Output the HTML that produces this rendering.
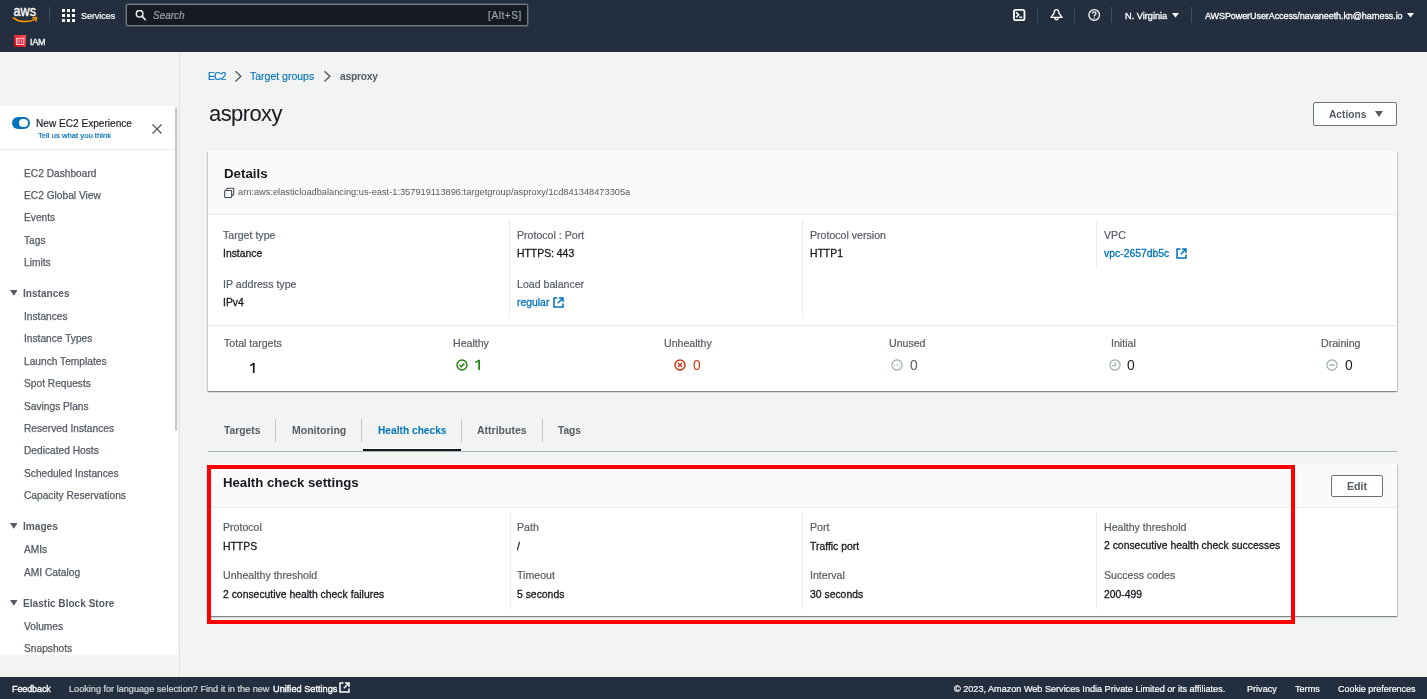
<!DOCTYPE html>
<html><head><meta charset="utf-8">
<style>
*{box-sizing:border-box;margin:0;padding:0}
html,body{width:1427px;height:699px;overflow:hidden;background:#f2f3f3;font-family:"Liberation Sans",sans-serif;color:#16191f;position:relative}
.abs{position:absolute}
.t{position:absolute;white-space:nowrap;line-height:1;will-change:transform}
.cont{position:absolute;background:#fff;box-shadow:0 1px 1px 0 rgba(0,28,36,.3),1px 1px 1px 0 rgba(0,28,36,.15),-1px 1px 1px 0 rgba(0,28,36,.15)}
</style></head><body>
<div class="abs" style="left:0px;top:0px;width:1427px;height:52px;background:#232f3e;"></div>
<svg class="abs" style="left:8px;top:4px" width="36" height="22" viewBox="0 0 36 22">
<text x="5.6" y="11.6" font-family="Liberation Sans" font-size="15" fill="#fff" textLength="22.4" lengthAdjust="spacingAndGlyphs" stroke="#fff" stroke-width="0.35">aws</text>
<path d="M5.3 13.9 C 11 18.3, 20 18.8, 26.6 15.3" stroke="#f90" stroke-width="1.5" fill="none" stroke-linecap="round"/>
<path d="M24.9 13.8 L28.6 13.6 L27.7 17.1" fill="none" stroke="#f90" stroke-width="1.5" stroke-linejoin="round" stroke-linecap="round"/>
</svg>
<div class="abs" style="left:49px;top:7px;width:1px;height:16px;background:#414d5c;"></div>
<svg class="abs" style="left:62px;top:9px" width="13" height="13" viewBox="0 0 13 13" fill="#fff">
<rect x="0" y="0" width="3" height="3"/><rect x="5" y="0" width="3" height="3"/><rect x="10" y="0" width="3" height="3"/>
<rect x="0" y="5" width="3" height="3"/><rect x="5" y="5" width="3" height="3"/><rect x="10" y="5" width="3" height="3"/>
<rect x="0" y="10" width="3" height="3"/><rect x="5" y="10" width="3" height="3"/><rect x="10" y="10" width="3" height="3"/>
</svg>
<div class="t" style="left:80.50px;top:12.00px;font-size:9px;color:#fff;font-weight:normal;-webkit-text-stroke:0.2px #fff;letter-spacing:-0.05px">Services</div>
<div class="abs" style="left:126px;top:4px;width:402px;height:23px;background:#161b22;border:1px solid #737e84;box-shadow:0 0 0 0.5px #5d676d;border-radius:2px;height:22.3px"></div>
<svg class="abs" style="left:135px;top:10px" width="12" height="12" viewBox="0 0 12 12">
<circle cx="4.6" cy="3.7" r="3.3" stroke="#e9ebed" stroke-width="1.5" fill="none"/>
<path d="M7 6.1 L10.2 9.6" stroke="#e9ebed" stroke-width="1.6" stroke-linecap="round"/>
</svg>
<div class="t" style="left:153.00px;top:11.00px;font-size:10px;color:#9aa4a8;font-weight:normal;font-style:italic;-webkit-text-stroke:0.2px #9aa4a8">Search</div>
<div class="t" style="left:487.50px;top:11.00px;font-size:10px;color:#9aa4a8;font-weight:normal;letter-spacing:0.6px;-webkit-text-stroke:0.2px #9aa4a8">[Alt+S]</div>
<svg class="abs" style="left:1013px;top:9px" width="13" height="12" viewBox="0 0 13 12">
<rect x="0.95" y="0.95" width="10.5" height="10.3" rx="1.8" stroke="#fff" stroke-width="1.8" fill="none"/>
<path d="M3.1 3.3 L5.6 5.8 L3.1 8.3" stroke="#fff" stroke-width="1.6" fill="none"/>
<path d="M6.2 8.3 H9.2" stroke="#fff" stroke-width="1.4" fill="none"/>
</svg>
<div class="abs" style="left:1037px;top:7px;width:1px;height:16px;background:#414d5c;"></div>
<svg class="abs" style="left:1050px;top:8px" width="13" height="14" viewBox="0 0 13 14">
<path d="M6.5 1.6 C 8.3 1.6, 8.9 3.4, 8.9 5.2 L 12 9.4 H 1 L 4.1 5.2 C 4.1 3.4, 4.7 1.6, 6.5 1.6 Z" stroke="#fff" stroke-width="1.4" fill="none" stroke-linejoin="round"/>
<path d="M4.8 10.1 A1.7 1.7 0 0 0 8.2 10.1" stroke="#fff" stroke-width="1.4" fill="none"/>
</svg>
<div class="abs" style="left:1074px;top:7px;width:1px;height:16px;background:#414d5c;"></div>
<svg class="abs" style="left:1087.5px;top:9px" width="13" height="13" viewBox="0 0 13 13">
<circle cx="6.2" cy="6" r="5.3" stroke="#fff" stroke-width="1.3" fill="none"/>
<path d="M4.4 4.6 Q4.4 2.9 6.2 2.9 Q8 2.9 8 4.5 Q8 5.5 6.9 6 Q6.2 6.4 6.2 7.5" stroke="#fff" stroke-width="1.3" fill="none"/>
<rect x="5.55" y="8.5" width="1.3" height="1.3" fill="#fff"/>
</svg>
<div class="abs" style="left:1111px;top:7px;width:1px;height:16px;background:#414d5c;"></div>
<div class="t" style="left:1124.70px;top:12.00px;font-size:9.2px;color:#fff;font-weight:normal;-webkit-text-stroke:0.3px #fff">N. Virginia</div>
<svg class="abs" style="left:1171.5px;top:12.8px" width="7" height="5" viewBox="0 0 7 5"><path d="M0 0 H7 L3.5 4.6 Z" fill="#fff"/></svg>
<div class="abs" style="left:1191px;top:7px;width:1px;height:16px;background:#414d5c;"></div>
<div class="t" style="left:1204.60px;top:12.00px;font-size:9px;color:#fff;font-weight:normal;-webkit-text-stroke:0.3px #fff;letter-spacing:-0.08px">AWSPowerUserAccess/navaneeth.kn@harness.io</div>
<svg class="abs" style="left:1406.5px;top:12.8px" width="7" height="5" viewBox="0 0 7 5"><path d="M0 0 H7 L3.5 4.6 Z" fill="#fff"/></svg>
<svg class="abs" style="left:14px;top:35px" width="12" height="12" viewBox="0 0 12 12">
<defs><linearGradient id="ig" x1="0" y1="1" x2="1" y2="0"><stop offset="0" stop-color="#bd0816"/><stop offset="1" stop-color="#ff5252"/></linearGradient></defs>
<rect width="12" height="12" fill="url(#ig)"/>
<rect x="2.4" y="3.3" width="7.4" height="6.3" stroke="#fde" stroke-width="0.8" fill="none"/>
<circle cx="4.5" cy="5.7" r="1.1" stroke="#fde" stroke-width="0.7" fill="none"/>
<path d="M3.3 8.4 Q4.5 6.9 5.7 8.4 M7.4 4.6 V8.2" stroke="#fde" stroke-width="0.7" fill="none"/>
</svg>
<div class="t" style="left:29.90px;top:38.00px;font-size:9px;color:#eee;font-weight:normal;-webkit-text-stroke:0.3px #fff;letter-spacing:-0.25px">IAM</div>
<div class="abs" style="left:0px;top:52px;width:179px;height:625px;background:#f2f3f3;"></div>
<div class="abs" style="left:179px;top:52px;width:1px;height:625px;background:#dfe3e3;"></div>
<div class="abs" style="left:0px;top:105.7px;width:178px;height:549.8px;background:#fff;"></div>
<div class="abs" style="left:177px;top:107px;width:1px;height:324px;background:#eceef0;"></div>
<div class="abs" style="left:175px;top:107px;width:2.2px;height:324px;background:#c4c7cd;border-radius:1px"></div>
<div class="abs" style="left:12px;top:116.8px;width:18px;height:12px;border-radius:6px;background:#0073bb"></div>
<div class="abs" style="left:19.4px;top:118.6px;width:8.8px;height:8.8px;border-radius:50%;background:#fff"></div>
<div class="t" style="left:36.00px;top:119.00px;font-size:10.1px;color:#16191f;font-weight:normal;-webkit-text-stroke:0.15px #16191f">New EC2 Experience</div>
<div class="t" style="left:38.20px;top:132.00px;font-size:7.7px;color:#0073bb;font-weight:normal;-webkit-text-stroke:0.2px #0073bb">Tell us what you think</div>
<svg class="abs" style="left:151px;top:123px" width="12" height="12" viewBox="0 0 12 12">
<path d="M1.5 1.5 L10.5 10.5 M10.5 1.5 L1.5 10.5" stroke="#545b64" stroke-width="1.4"/>
</svg>
<div class="abs" style="left:0px;top:149px;width:175px;height:1px;background:#eaeded;"></div>
<div class="t" style="left:24.00px;top:169.00px;font-size:10.2px;color:#545b64;font-weight:normal;-webkit-text-stroke:0.25px #545b64">EC2 Dashboard</div>
<div class="t" style="left:24.00px;top:191.00px;font-size:10.2px;color:#545b64;font-weight:normal;-webkit-text-stroke:0.25px #545b64">EC2 Global View</div>
<div class="t" style="left:24.00px;top:213.00px;font-size:10.2px;color:#545b64;font-weight:normal;-webkit-text-stroke:0.25px #545b64">Events</div>
<div class="t" style="left:24.00px;top:236.00px;font-size:10.2px;color:#545b64;font-weight:normal;-webkit-text-stroke:0.25px #545b64">Tags</div>
<div class="t" style="left:24.00px;top:258.00px;font-size:10.2px;color:#545b64;font-weight:normal;-webkit-text-stroke:0.25px #545b64">Limits</div>
<div class="t" style="left:23.40px;top:289.00px;font-size:10.1px;color:#545b64;font-weight:bold;">Instances</div>
<svg class="abs" style="left:9.7px;top:290.1px" width="7.6" height="5.8" viewBox="0 0 7.6 5.8"><path d="M0 0 H7.6 L3.8 5.8 Z" fill="#545b64"/></svg>
<div class="t" style="left:24.00px;top:312.00px;font-size:10.2px;color:#545b64;font-weight:normal;-webkit-text-stroke:0.25px #545b64">Instances</div>
<div class="t" style="left:24.00px;top:334.00px;font-size:10.2px;color:#545b64;font-weight:normal;-webkit-text-stroke:0.25px #545b64">Instance Types</div>
<div class="t" style="left:24.00px;top:357.00px;font-size:10.2px;color:#545b64;font-weight:normal;-webkit-text-stroke:0.25px #545b64">Launch Templates</div>
<div class="t" style="left:24.00px;top:379.00px;font-size:10.2px;color:#545b64;font-weight:normal;-webkit-text-stroke:0.25px #545b64">Spot Requests</div>
<div class="t" style="left:24.00px;top:402.00px;font-size:10.2px;color:#545b64;font-weight:normal;-webkit-text-stroke:0.25px #545b64">Savings Plans</div>
<div class="t" style="left:24.00px;top:424.00px;font-size:10.2px;color:#545b64;font-weight:normal;-webkit-text-stroke:0.25px #545b64">Reserved Instances</div>
<div class="t" style="left:24.00px;top:446.00px;font-size:10.2px;color:#545b64;font-weight:normal;-webkit-text-stroke:0.25px #545b64">Dedicated Hosts</div>
<div class="t" style="left:24.00px;top:469.00px;font-size:10.2px;color:#545b64;font-weight:normal;-webkit-text-stroke:0.25px #545b64">Scheduled Instances</div>
<div class="t" style="left:24.00px;top:491.00px;font-size:10.2px;color:#545b64;font-weight:normal;-webkit-text-stroke:0.25px #545b64">Capacity Reservations</div>
<div class="t" style="left:23.40px;top:522.00px;font-size:10.1px;color:#545b64;font-weight:bold;">Images</div>
<svg class="abs" style="left:9.7px;top:523.1px" width="7.6" height="5.8" viewBox="0 0 7.6 5.8"><path d="M0 0 H7.6 L3.8 5.8 Z" fill="#545b64"/></svg>
<div class="t" style="left:24.00px;top:545.00px;font-size:10.2px;color:#545b64;font-weight:normal;-webkit-text-stroke:0.25px #545b64">AMIs</div>
<div class="t" style="left:24.00px;top:568.00px;font-size:10.2px;color:#545b64;font-weight:normal;-webkit-text-stroke:0.25px #545b64">AMI Catalog</div>
<div class="t" style="left:23.40px;top:599.00px;font-size:10.1px;color:#545b64;font-weight:bold;">Elastic Block Store</div>
<svg class="abs" style="left:9.7px;top:600.1px" width="7.6" height="5.8" viewBox="0 0 7.6 5.8"><path d="M0 0 H7.6 L3.8 5.8 Z" fill="#545b64"/></svg>
<div class="t" style="left:24.00px;top:622.00px;font-size:10.2px;color:#545b64;font-weight:normal;-webkit-text-stroke:0.25px #545b64">Volumes</div>
<div class="t" style="left:24.00px;top:644.00px;font-size:10.2px;color:#545b64;font-weight:normal;-webkit-text-stroke:0.25px #545b64">Snapshots</div>
<div class="t" style="left:208.00px;top:72.00px;font-size:10.2px;color:#0073bb;font-weight:normal;letter-spacing:-0.75px;-webkit-text-stroke:0.2px #0073bb">EC2</div>
<svg class="abs" style="left:234px;top:70px" width="8" height="13" viewBox="0 0 8 13"><path d="M1.5 1.2 L6.8 6.3 L1.5 11.4" stroke="#545b64" stroke-width="1.4" fill="none"/></svg>
<div class="t" style="left:250.30px;top:71.00px;font-size:10.5px;color:#0073bb;font-weight:normal;-webkit-text-stroke:0.15px #0073bb">Target groups</div>
<svg class="abs" style="left:323.2px;top:70px" width="8" height="13" viewBox="0 0 8 13"><path d="M1.5 1.2 L6.8 6.3 L1.5 11.4" stroke="#545b64" stroke-width="1.4" fill="none"/></svg>
<div class="t" style="left:340.00px;top:72.00px;font-size:10.2px;color:#545b64;font-weight:bold;letter-spacing:-0.2px">asproxy</div>
<div class="t" style="left:208.50px;top:103.00px;font-size:22px;color:#16191f;font-weight:normal;letter-spacing:-0.6px">asproxy</div>
<div class="abs" style="left:1313px;top:102px;width:84px;height:24px;background:#fff;border:1px solid #687078;border-radius:2px"></div>
<div class="t" style="left:1329.20px;top:110.00px;font-size:10.2px;color:#545b64;font-weight:bold;">Actions</div>
<svg class="abs" style="left:1374.5px;top:111px" width="8" height="6" viewBox="0 0 8 6"><path d="M0 0 H8 L4 6 Z" fill="#545b64"/></svg>
<div class="cont" style="left:208px;top:150.5px;width:1189px;height:240.5px"></div>
<div class="abs" style="left:208px;top:150.5px;width:1189px;height:63.5px;background:#fafafa;"></div>
<div class="abs" style="left:208px;top:214px;width:1189px;height:1px;background:#eaeded;"></div>
<div class="t" style="left:223.60px;top:167.00px;font-size:13.3px;color:#16191f;font-weight:bold;">Details</div>
<svg class="abs" style="left:223px;top:187px" width="12" height="12" viewBox="0 0 12 12">
<rect x="3.85" y="1.2" width="6.9" height="6.9" rx="0.8" stroke="#3f4650" stroke-width="1.1" fill="none"/>
<rect x="1.75" y="3.55" width="6.9" height="6.9" rx="0.8" stroke="#3f4650" stroke-width="1.1" fill="#fafafa"/>
</svg>
<div class="t" style="left:237.60px;top:188.00px;font-size:9.25px;color:#545b64;font-weight:normal;">arn:aws:elasticloadbalancing:us-east-1:357919113896:targetgroup/asproxy/1cd841348473305a</div>
<div class="abs" style="left:509px;top:219.5px;width:1px;height:98px;background:#eaeded;"></div>
<div class="abs" style="left:802px;top:219.5px;width:1px;height:98px;background:#eaeded;"></div>
<div class="abs" style="left:1096px;top:219.5px;width:1px;height:49px;background:#eaeded;"></div>
<div class="t" style="left:223.40px;top:230.00px;font-size:10.6px;color:#545b64;font-weight:normal;-webkit-text-stroke:0.2px #545b64">Target type</div>
<div class="t" style="left:223.40px;top:249.00px;font-size:10.4px;color:#16191f;font-weight:normal;-webkit-text-stroke:0.3px #16191f">Instance</div>
<div class="t" style="left:223.40px;top:279.00px;font-size:10.6px;color:#545b64;font-weight:normal;-webkit-text-stroke:0.2px #545b64">IP address type</div>
<div class="t" style="left:223.40px;top:298.00px;font-size:10.4px;color:#16191f;font-weight:normal;-webkit-text-stroke:0.3px #16191f">IPv4</div>
<div class="t" style="left:516.70px;top:230.00px;font-size:10.6px;color:#545b64;font-weight:normal;-webkit-text-stroke:0.2px #545b64">Protocol : Port</div>
<div class="t" style="left:516.70px;top:249.00px;font-size:10.4px;color:#16191f;font-weight:normal;-webkit-text-stroke:0.3px #16191f">HTTPS: 443</div>
<div class="t" style="left:516.70px;top:279.00px;font-size:10.6px;color:#545b64;font-weight:normal;-webkit-text-stroke:0.2px #545b64">Load balancer</div>
<div class="t" style="left:516.70px;top:298.00px;font-size:10.4px;color:#0073bb;font-weight:normal;-webkit-text-stroke:0.3px #0073bb">regular</div>
<svg class="abs" style="left:553px;top:297px" width="11" height="11" viewBox="0 0 11 11">
<path d="M4.5 1 H1 V10 H10 V6.5" stroke="#0073bb" stroke-width="1.5" fill="none"/>
<path d="M6 1 H10 V5 M10 1 L4.8 6.2" stroke="#0073bb" stroke-width="1.5" fill="none"/>
</svg>
<div class="t" style="left:810.30px;top:230.00px;font-size:10.6px;color:#545b64;font-weight:normal;-webkit-text-stroke:0.2px #545b64">Protocol version</div>
<div class="t" style="left:810.30px;top:249.00px;font-size:10.4px;color:#16191f;font-weight:normal;-webkit-text-stroke:0.3px #16191f">HTTP1</div>
<div class="t" style="left:1103.90px;top:230.00px;font-size:10.6px;color:#545b64;font-weight:normal;-webkit-text-stroke:0.2px #545b64">VPC</div>
<div class="t" style="left:1103.90px;top:249.00px;font-size:10.4px;color:#0073bb;font-weight:normal;-webkit-text-stroke:0.3px #0073bb">vpc-2657db5c</div>
<svg class="abs" style="left:1175.5px;top:247.5px" width="11" height="11" viewBox="0 0 11 11">
<path d="M4.5 1 H1 V10 H10 V6.5" stroke="#0073bb" stroke-width="1.5" fill="none"/>
<path d="M6 1 H10 V5 M10 1 L4.8 6.2" stroke="#0073bb" stroke-width="1.5" fill="none"/>
</svg>
<div class="abs" style="left:208px;top:325px;width:1189px;height:1px;background:#eaeded;"></div>
<div class="t" style="left:223.70px;top:338.00px;font-size:10.6px;color:#545b64;font-weight:normal;-webkit-text-stroke:0.2px #545b64">Total targets</div>
<svg class="abs" style="left:249px;top:362px" width="8" height="12" viewBox="0 0 8 12"><path d="M4.75 1.2 V11" stroke="#16191f" stroke-width="1.75" stroke-linecap="butt"/><path d="M1.8 3.3 L4.9 1.5" stroke="#16191f" stroke-width="1.5" stroke-linecap="round"/></svg>
<div class="t" style="left:452.80px;top:338.00px;font-size:10.6px;color:#545b64;font-weight:normal;-webkit-text-stroke:0.2px #545b64">Healthy</div>
<svg class="abs" style="left:455.7px;top:358.7px" width="12" height="12" viewBox="0 0 12 12">
<circle cx="6" cy="6" r="5" stroke="#1d8102" stroke-width="1.4" fill="none"/>
<path d="M3.6 6.1 L5.3 7.8 L8.4 4.6" stroke="#1d8102" stroke-width="1.4" fill="none"/></svg>
<svg class="abs" style="left:474px;top:359px" width="8" height="12" viewBox="0 0 8 12"><path d="M5.1 1.1 V11" stroke="#1d8102" stroke-width="1.7" stroke-linecap="butt"/><path d="M1.9 3.2 L5.2 1.4" stroke="#1d8102" stroke-width="1.5" stroke-linecap="round"/></svg>
<div class="t" style="left:664.30px;top:338.00px;font-size:10.6px;color:#545b64;font-weight:normal;-webkit-text-stroke:0.2px #545b64">Unhealthy</div>
<svg class="abs" style="left:674.2px;top:358.5px" width="12" height="12" viewBox="0 0 12 12">
<circle cx="6" cy="6" r="5" stroke="#d13212" stroke-width="1.4" fill="none"/>
<path d="M4 4 L8 8 M8 4 L4 8" stroke="#d13212" stroke-width="1.4" fill="none"/></svg>
<div class="t" style="left:692.70px;top:359.00px;font-size:13.8px;color:#d13212;font-weight:normal;">0</div>
<div class="t" style="left:888.60px;top:338.00px;font-size:10.6px;color:#545b64;font-weight:normal;-webkit-text-stroke:0.2px #545b64">Unused</div>
<svg class="abs" style="left:891.2px;top:358.7px" width="12" height="12" viewBox="0 0 12 12">
<circle cx="6" cy="6" r="5.1" stroke="#95a5a6" stroke-width="1.1" fill="none"/>
<circle cx="3.6" cy="6" r="0.55" fill="#687078"/><circle cx="5.9" cy="6" r="0.55" fill="#687078"/><circle cx="8.2" cy="6" r="0.55" fill="#687078"/></svg>
<div class="t" style="left:909.60px;top:359.00px;font-size:13.8px;color:#545b64;font-weight:normal;">0</div>
<div class="t" style="left:1110.50px;top:338.00px;font-size:10.6px;color:#545b64;font-weight:normal;-webkit-text-stroke:0.2px #545b64">Initial</div>
<svg class="abs" style="left:1109.2px;top:358.7px" width="12" height="12" viewBox="0 0 12 12">
<circle cx="6" cy="6" r="5.1" stroke="#95a5a6" stroke-width="1.1" fill="none"/>
<path d="M6.2 3.3 V6.8 H3.1" stroke="#95a5a6" stroke-width="1.1" fill="none"/></svg>
<div class="t" style="left:1127.30px;top:359.00px;font-size:13.8px;color:#16191f;font-weight:normal;">0</div>
<div class="t" style="left:1321.40px;top:338.00px;font-size:10.6px;color:#545b64;font-weight:normal;-webkit-text-stroke:0.2px #545b64">Draining</div>
<svg class="abs" style="left:1326.1px;top:358.7px" width="12" height="12" viewBox="0 0 12 12">
<circle cx="6" cy="6" r="5.1" stroke="#95a5a6" stroke-width="1.1" fill="none"/>
<path d="M3.4 6 H8.6" stroke="#8d9a9b" stroke-width="1.2" fill="none"/></svg>
<div class="t" style="left:1345.00px;top:359.00px;font-size:13.8px;color:#16191f;font-weight:normal;">0</div>
<div class="t" style="left:224.00px;top:426.00px;font-size:10.3px;color:#545b64;font-weight:bold;">Targets</div>
<div class="abs" style="left:275px;top:419px;width:1px;height:22.5px;background:#c0c7c7;"></div>
<div class="t" style="left:291.90px;top:425.00px;font-size:10.5px;color:#545b64;font-weight:bold;">Monitoring</div>
<div class="abs" style="left:361px;top:419px;width:1px;height:22.5px;background:#c0c7c7;"></div>
<div class="t" style="left:378.00px;top:426.00px;font-size:10.2px;color:#0073bb;font-weight:bold;">Health checks</div>
<div class="abs" style="left:461px;top:419px;width:1px;height:22.5px;background:#c0c7c7;"></div>
<div class="t" style="left:477.00px;top:425.00px;font-size:10.5px;color:#545b64;font-weight:bold;">Attributes</div>
<div class="abs" style="left:542px;top:419px;width:1px;height:22.5px;background:#c0c7c7;"></div>
<div class="t" style="left:557.60px;top:426.00px;font-size:10.1px;color:#545b64;font-weight:bold;">Tags</div>
<div class="abs" style="left:208.4px;top:450.6px;width:1189px;height:1px;background:#aab7b8;"></div>
<div class="abs" style="left:362.5px;top:448px;width:98.5px;height:1px;background:#ffffff;"></div>
<div class="abs" style="left:362.5px;top:449px;width:98.5px;height:2.4px;background:#16191f;"></div>
<div class="cont" style="left:208px;top:464.2px;width:1189px;height:152px"></div>
<div class="abs" style="left:208px;top:464.2px;width:1189px;height:43px;background:#fafafa;"></div>
<div class="abs" style="left:208px;top:507.3px;width:1189px;height:1px;background:#eaeded;"></div>
<div class="t" style="left:222.70px;top:476.00px;font-size:13.2px;color:#16191f;font-weight:bold;">Health check settings</div>
<div class="abs" style="left:1331px;top:475px;width:51.5px;height:22px;background:#fff;border:1px solid #687078;border-radius:2px"></div>
<div class="t" style="left:1346.70px;top:481.00px;font-size:10.6px;color:#545b64;font-weight:bold;">Edit</div>
<div class="abs" style="left:509.5px;top:511.5px;width:1px;height:97px;background:#eaeded;"></div>
<div class="abs" style="left:802px;top:511.5px;width:1px;height:97px;background:#eaeded;"></div>
<div class="abs" style="left:1096.4px;top:511.5px;width:1px;height:97px;background:#eaeded;"></div>
<div class="t" style="left:223.40px;top:522.00px;font-size:10.6px;color:#545b64;font-weight:normal;-webkit-text-stroke:0.2px #545b64">Protocol</div>
<div class="t" style="left:223.40px;top:542.00px;font-size:10.4px;color:#16191f;font-weight:normal;-webkit-text-stroke:0.3px #16191f">HTTPS</div>
<div class="t" style="left:223.40px;top:570.00px;font-size:10.6px;color:#545b64;font-weight:normal;-webkit-text-stroke:0.2px #545b64">Unhealthy threshold</div>
<div class="t" style="left:223.40px;top:590.00px;font-size:10.4px;color:#16191f;font-weight:normal;-webkit-text-stroke:0.3px #16191f">2 consecutive health check failures</div>
<div class="t" style="left:516.80px;top:522.00px;font-size:10.6px;color:#545b64;font-weight:normal;-webkit-text-stroke:0.2px #545b64">Path</div>
<div class="t" style="left:516.80px;top:542.00px;font-size:10.4px;color:#16191f;font-weight:normal;-webkit-text-stroke:0.3px #16191f">/</div>
<div class="t" style="left:516.80px;top:570.00px;font-size:10.6px;color:#545b64;font-weight:normal;-webkit-text-stroke:0.2px #545b64">Timeout</div>
<div class="t" style="left:516.80px;top:590.00px;font-size:10.4px;color:#16191f;font-weight:normal;-webkit-text-stroke:0.3px #16191f">5 seconds</div>
<div class="t" style="left:810.30px;top:522.00px;font-size:10.6px;color:#545b64;font-weight:normal;-webkit-text-stroke:0.2px #545b64">Port</div>
<div class="t" style="left:810.30px;top:542.00px;font-size:10.4px;color:#16191f;font-weight:normal;-webkit-text-stroke:0.3px #16191f">Traffic port</div>
<div class="t" style="left:810.30px;top:570.00px;font-size:10.6px;color:#545b64;font-weight:normal;-webkit-text-stroke:0.2px #545b64">Interval</div>
<div class="t" style="left:810.30px;top:590.00px;font-size:10.4px;color:#16191f;font-weight:normal;-webkit-text-stroke:0.3px #16191f">30 seconds</div>
<div class="t" style="left:1104.10px;top:522.00px;font-size:10.6px;color:#545b64;font-weight:normal;-webkit-text-stroke:0.2px #545b64">Healthy threshold</div>
<div class="t" style="left:1104.10px;top:541.00px;font-size:10.4px;color:#16191f;font-weight:normal;-webkit-text-stroke:0.3px #16191f">2 consecutive health check successes</div>
<div class="t" style="left:1104.10px;top:570.00px;font-size:10.6px;color:#545b64;font-weight:normal;-webkit-text-stroke:0.2px #545b64">Success codes</div>
<div class="t" style="left:1104.10px;top:590.00px;font-size:10.4px;color:#16191f;font-weight:normal;-webkit-text-stroke:0.3px #16191f">200-499</div>
<div class="abs" style="left:207px;top:465.1px;width:1087.7px;height:159.2px;border:4.5px solid #ff0000"></div>
<div class="abs" style="left:0px;top:677px;width:1427px;height:22px;background:#232f3e;"></div>
<div class="t" style="left:12.30px;top:685.00px;font-size:9px;color:#fff;font-weight:normal;-webkit-text-stroke:0.35px #fff;letter-spacing:-0.1px">Feedback</div>
<div class="t" style="left:69.00px;top:685.00px;font-size:9.15px;color:#d5dbdb;font-weight:normal;-webkit-text-stroke:0.2px #d5dbdb">Looking for language selection? Find it in the new</div>
<div class="t" style="left:272.60px;top:685.00px;font-size:9.2px;color:#fff;font-weight:normal;-webkit-text-stroke:0.35px #fff">Unified Settings</div>
<svg class="abs" style="left:339px;top:682px" width="11" height="11" viewBox="0 0 11 11">
<path d="M4.5 1 H1 V10 H10 V6.5" stroke="#fff" stroke-width="1.5" fill="none"/>
<path d="M6 1 H10 V5 M10 1 L4.8 6.2" stroke="#fff" stroke-width="1.5" fill="none"/>
</svg>
<div class="t" style="left:953.70px;top:685.00px;font-size:9.1px;color:#fff;font-weight:normal;-webkit-text-stroke:0.2px #fff">© 2023, Amazon Web Services India Private Limited or its affiliates.</div>
<div class="t" style="left:1247.00px;top:685.00px;font-size:9.1px;color:#fff;font-weight:normal;-webkit-text-stroke:0.2px #fff">Privacy</div>
<div class="t" style="left:1295.00px;top:685.00px;font-size:9.1px;color:#fff;font-weight:normal;-webkit-text-stroke:0.2px #fff">Terms</div>
<div class="t" style="left:1338.30px;top:685.00px;font-size:8.95px;color:#fff;font-weight:normal;-webkit-text-stroke:0.2px #fff">Cookie preferences</div>
</body></html>
